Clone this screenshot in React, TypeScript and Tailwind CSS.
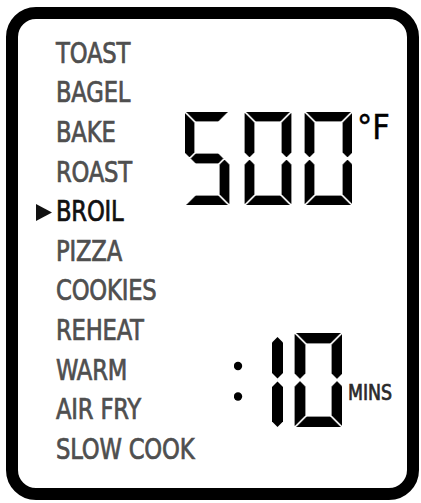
import React from "react";

const MODES = [
  "TOAST",
  "BAGEL",
  "BAKE",
  "ROAST",
  "BROIL",
  "PIZZA",
  "COOKIES",
  "REHEAT",
  "WARM",
  "AIR FRY",
  "SLOW COOK",
];

const SELECTED = "BROIL";

type Seg = "a" | "b" | "c" | "d" | "e" | "f" | "g";

const DIGIT_SEGS: Record<string, Seg[]> = {
  "0": ["a", "b", "c", "d", "e", "f"],
  "5": ["a", "f", "g", "c", "d"],
};

const pts = (p: number[][]) => p.map(([x, y]) => `${x},${y}`).join(" ");

// one 7-segment digit, mitred corners like the oven's LCD
function segPolys(ox: number, oy: number, W: number, H: number, t: number, g: number) {
  const m = oy + H / 2;
  return {
    a: pts([[ox + g, oy], [ox + W - g, oy], [ox + W - t - g, oy + t], [ox + t + g, oy + t]]),
    d: pts([[ox + t + g, oy + H - t], [ox + W - t - g, oy + H - t], [ox + W - g, oy + H], [ox + g, oy + H]]),
    f: pts([[ox, oy + g], [ox + t, oy + t + g], [ox + t, m - t / 2 - g], [ox + t / 2, m - g], [ox, m - t / 2 - g]]),
    b: pts([[ox + W, oy + g], [ox + W - t, oy + t + g], [ox + W - t, m - t / 2 - g], [ox + W - t / 2, m - g], [ox + W, m - t / 2 - g]]),
    e: pts([[ox, oy + H - g], [ox + t, oy + H - t - g], [ox + t, m + t / 2 + g], [ox + t / 2, m + g], [ox, m + t / 2 + g]]),
    c: pts([[ox + W, oy + H - g], [ox + W - t, oy + H - t - g], [ox + W - t, m + t / 2 + g], [ox + W - t / 2, m + g], [ox + W, m + t / 2 + g]]),
    g: pts([[ox + t / 2 + g, m], [ox + t + g, m - t / 2], [ox + W - t - g, m - t / 2], [ox + W - t / 2 - g, m], [ox + W - t - g, m + t / 2], [ox + t + g, m + t / 2]]),
  } as Record<Seg, string>;
}

function Digit({ ch, ox, oy, W, H, t }: { ch: string; ox: number; oy: number; W: number; H: number; t: number }) {
  const polys = segPolys(ox, oy, W, H, t, 1.6);
  return (
    <>
      {DIGIT_SEGS[ch].map((s) => (
        <polygon key={s} points={polys[s]} fill="#000" stroke="#000" strokeWidth={0.8} strokeLinejoin="round" />
      ))}
    </>
  );
}

// vertical bar with pointed ends (used for the "1")
function vBar(xc: number, y1: number, y2: number, t: number) {
  return pts([[xc, y1], [xc + t / 2, y1 + t / 2], [xc + t / 2, y2 - t / 2], [xc, y2], [xc - t / 2, y2 - t / 2], [xc - t / 2, y1 + t / 2]]);
}

const font = { fontFamily: '"Liberation Sans Narrow", "DejaVu Sans Condensed", "Liberation Sans", sans-serif' };

export default function App() {
  return (
    <div className="w-[421px] h-[503px] bg-white pt-[7px] pl-[6px]" style={font}>
      <div className="w-[413px] h-[493px] border-[12px] border-black rounded-[30px] flex">
        {/* cooking modes */}
        <ul className="w-[167px] shrink-0 pl-[18px] pt-[15px] flex flex-col">
          {MODES.map((m) => (
            <li key={m} className="flex items-center h-[39.6px]">
              <span className="w-[20px] shrink-0 flex items-center">
                {m === SELECTED && (
                  <svg width="16" height="17" viewBox="0 0 16 17">
                    <polygon points="0,0 16,8.5 0,17" fill="#111" />
                  </svg>
                )}
              </span>
              <span
                className={
                  "text-[28px] leading-none whitespace-nowrap origin-left scale-x-[0.9] tracking-[-0.2px] " +
                  (m === SELECTED
                    ? "text-[#111] [-webkit-text-stroke:0.7px_#111]"
                    : "text-[#4f4f4f] [-webkit-text-stroke:0.7px_#4f4f4f]")
                }
              >
                {m}
              </span>
            </li>
          ))}
        </ul>

        {/* readouts */}
        <div className="flex flex-col pt-[93px]">
          <div className="flex items-start">
            <svg width="167" height="93" viewBox="0 0 167 93" aria-label="500">
              <Digit ch="5" ox={0} oy={0} W={44} H={93} t={9} />
              <Digit ch="0" ox={60} oy={0} W={46} H={93} t={9} />
              <Digit ch="0" ox={120} oy={0} W={47} H={93} t={9} />
            </svg>
            <span className="ml-[5px] mt-[-2px] text-[34px] leading-none text-black whitespace-nowrap [-webkit-text-stroke:0.4px_#000]">
              °F
            </span>
          </div>

          <div className="flex items-start mt-[128px] ml-[49px]">
            <svg width="108" height="94" viewBox="0 0 108 94" aria-label=":10">
              <circle cx="4" cy="33" r="4.2" fill="#000" />
              <circle cx="4" cy="63.5" r="4.2" fill="#000" />
              <polygon points={vBar(43.5, 4, 45.5, 11)} fill="#000" />
              <polygon points={vBar(43.5, 48.5, 94, 11)} fill="#000" />
              <Digit ch="0" ox={61} oy={0} W={47} H={94} t={10} />
            </svg>
            <span className="ml-[6px] mt-[50px] text-[21px] leading-none text-[#2a2a2a] whitespace-nowrap origin-left scale-x-[0.92] [-webkit-text-stroke:0.7px_#2a2a2a]">
              MINS
            </span>
          </div>
        </div>
      </div>
    </div>
  );
}
